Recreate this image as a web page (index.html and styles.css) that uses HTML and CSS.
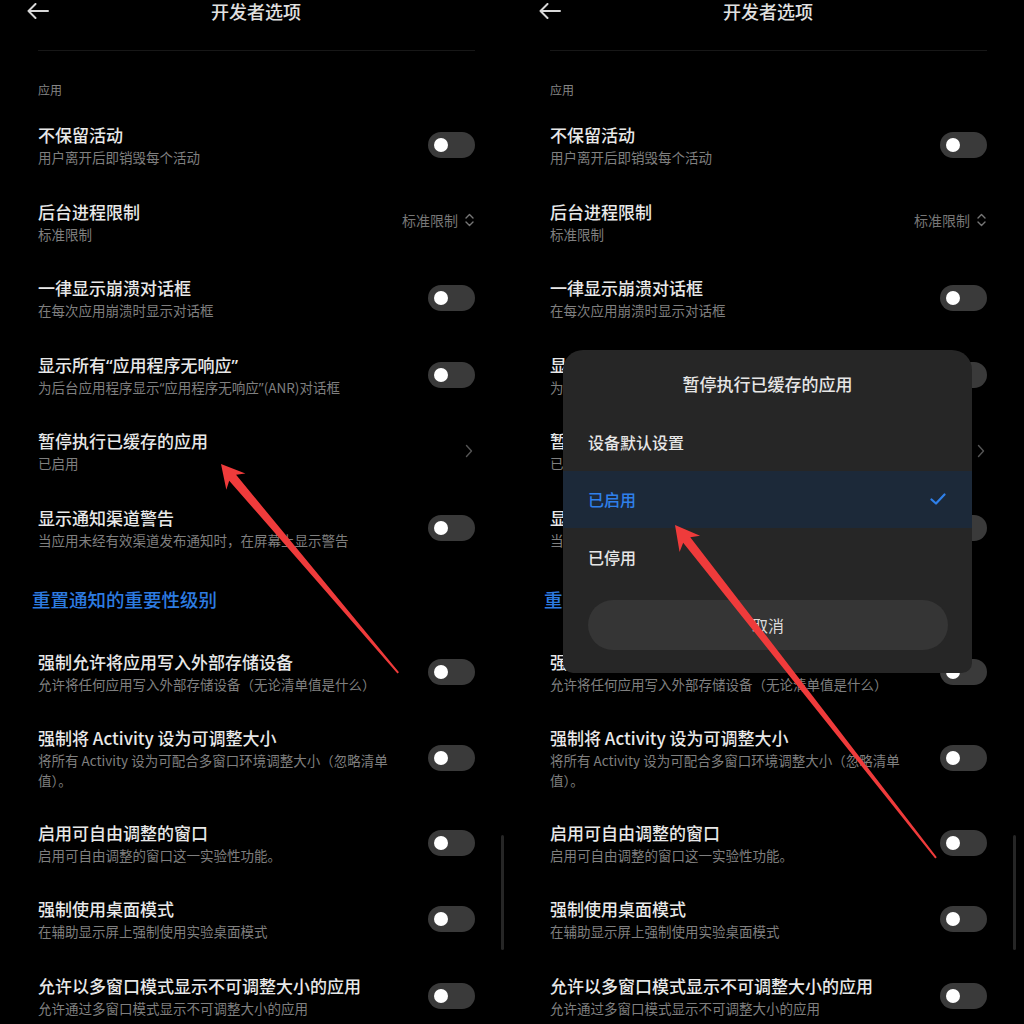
FILE: index.html
```html
<!DOCTYPE html>
<html lang="zh-CN">
<head>
<meta charset="utf-8">
<title>开发者选项</title>
<link rel="stylesheet" href="styles.css">
</head>
<body>
<div class="screens">
  <!-- LEFT PANEL -->
  <section class="panel">
    <header class="header">
      <svg class="back" width="22" height="16" viewBox="0 0 22 16"><path d="M8.5 1 L1.5 8 L8.5 15 M1.5 8 H21" fill="none" stroke="#d8d8d8" stroke-width="2" stroke-linecap="round" stroke-linejoin="round"/></svg>
      <h1 class="title">开发者选项</h1>
    </header>
    <div class="divider"></div>
    <div class="list">
      <div class="section">应用</div>
      <div class="row"><div class="text"><div class="t">不保留活动</div><div class="s">用户离开后即销毁每个活动</div></div><div class="toggle"></div></div>
      <div class="row"><div class="text"><div class="t">后台进程限制</div><div class="s">标准限制</div></div><div class="value">标准限制<svg width="9" height="14" viewBox="0 0 9 14"><path d="M1 5 L4.5 1.5 L8 5 M1 9 L4.5 12.5 L8 9" fill="none" stroke="#777" stroke-width="1.4" stroke-linecap="round" stroke-linejoin="round"/></svg></div></div>
      <div class="row"><div class="text"><div class="t">一律显示崩溃对话框</div><div class="s">在每次应用崩溃时显示对话框</div></div><div class="toggle"></div></div>
      <div class="row"><div class="text"><div class="t">显示所有<span class="q">“</span>应用程序无响应<span class="q">”</span></div><div class="s">为后台应用程序显示<span class="q">“</span>应用程序无响应<span class="q">”</span>(ANR)对话框</div></div><div class="toggle"></div></div>
      <div class="row"><div class="text"><div class="t">暂停执行已缓存的应用</div><div class="s">已启用</div></div><svg class="chev" width="8" height="14" viewBox="0 0 8 14"><path d="M1.5 1.5 L6.5 7 L1.5 12.5" fill="none" stroke="#555" stroke-width="1.4" stroke-linecap="round" stroke-linejoin="round"/></svg></div>
      <div class="row"><div class="text"><div class="t">显示通知渠道警告</div><div class="s">当应用未经有效渠道发布通知时，在屏幕上显示警告</div></div><div class="toggle"></div></div>
      <div class="reset">重置通知的重要性级别</div>
      <div class="row"><div class="text"><div class="t">强制允许将应用写入外部存储设备</div><div class="s">允许将任何应用写入外部存储设备（无论清单值是什么）</div></div><div class="toggle"></div></div>
      <div class="row tall"><div class="text"><div class="t">强制将 Activity 设为可调整大小</div><div class="s">将所有 Activity 设为可配合多窗口环境调整大小（忽略清单值）。</div></div><div class="toggle"></div></div>
      <div class="row"><div class="text"><div class="t">启用可自由调整的窗口</div><div class="s">启用可自由调整的窗口这一实验性功能。</div></div><div class="toggle"></div></div>
      <div class="row"><div class="text"><div class="t">强制使用桌面模式</div><div class="s">在辅助显示屏上强制使用实验桌面模式</div></div><div class="toggle"></div></div>
      <div class="row"><div class="text"><div class="t">允许以多窗口模式显示不可调整大小的应用</div><div class="s">允许通过多窗口模式显示不可调整大小的应用</div></div><div class="toggle"></div></div>
    </div>
    <div class="scrollbar"></div>
    <svg class="annot" width="512" height="1024" viewBox="0 0 512 1024">
      <g transform="translate(221 464) rotate(-130.3)">
        <polygon points="0,0 -23,12.5 -18,4.5 -274,1 -274,-1 -18,-4.5 -23,-12.5" fill="#ef3b3b"/>
      </g>
    </svg>
  </section>

  <!-- RIGHT PANEL -->
  <section class="panel">
    <header class="header">
      <svg class="back" width="22" height="16" viewBox="0 0 22 16"><path d="M8.5 1 L1.5 8 L8.5 15 M1.5 8 H21" fill="none" stroke="#d8d8d8" stroke-width="2" stroke-linecap="round" stroke-linejoin="round"/></svg>
      <h1 class="title">开发者选项</h1>
    </header>
    <div class="divider"></div>
    <div class="list">
      <div class="section">应用</div>
      <div class="row"><div class="text"><div class="t">不保留活动</div><div class="s">用户离开后即销毁每个活动</div></div><div class="toggle"></div></div>
      <div class="row"><div class="text"><div class="t">后台进程限制</div><div class="s">标准限制</div></div><div class="value">标准限制<svg width="9" height="14" viewBox="0 0 9 14"><path d="M1 5 L4.5 1.5 L8 5 M1 9 L4.5 12.5 L8 9" fill="none" stroke="#777" stroke-width="1.4" stroke-linecap="round" stroke-linejoin="round"/></svg></div></div>
      <div class="row"><div class="text"><div class="t">一律显示崩溃对话框</div><div class="s">在每次应用崩溃时显示对话框</div></div><div class="toggle"></div></div>
      <div class="row"><div class="text"><div class="t">显示所有<span class="q">“</span>应用程序无响应<span class="q">”</span></div><div class="s">为后台应用程序显示<span class="q">“</span>应用程序无响应<span class="q">”</span>(ANR)对话框</div></div><div class="toggle"></div></div>
      <div class="row"><div class="text"><div class="t">暂停执行已缓存的应用</div><div class="s">已启用</div></div><svg class="chev" width="8" height="14" viewBox="0 0 8 14"><path d="M1.5 1.5 L6.5 7 L1.5 12.5" fill="none" stroke="#555" stroke-width="1.4" stroke-linecap="round" stroke-linejoin="round"/></svg></div>
      <div class="row"><div class="text"><div class="t">显示通知渠道警告</div><div class="s">当应用未经有效渠道发布通知时，在屏幕上显示警告</div></div><div class="toggle"></div></div>
      <div class="reset">重置通知的重要性级别</div>
      <div class="row"><div class="text"><div class="t">强制允许将应用写入外部存储设备</div><div class="s">允许将任何应用写入外部存储设备（无论清单值是什么）</div></div><div class="toggle"></div></div>
      <div class="row tall"><div class="text"><div class="t">强制将 Activity 设为可调整大小</div><div class="s">将所有 Activity 设为可配合多窗口环境调整大小（忽略清单值）。</div></div><div class="toggle"></div></div>
      <div class="row"><div class="text"><div class="t">启用可自由调整的窗口</div><div class="s">启用可自由调整的窗口这一实验性功能。</div></div><div class="toggle"></div></div>
      <div class="row"><div class="text"><div class="t">强制使用桌面模式</div><div class="s">在辅助显示屏上强制使用实验桌面模式</div></div><div class="toggle"></div></div>
      <div class="row"><div class="text"><div class="t">允许以多窗口模式显示不可调整大小的应用</div><div class="s">允许通过多窗口模式显示不可调整大小的应用</div></div><div class="toggle"></div></div>
    </div>
    <div class="scrollbar"></div>

    <div class="dialog">
      <div class="dlg-title">暂停执行已缓存的应用</div>
      <div class="opt">设备默认设置</div>
      <div class="opt sel">已启用<svg width="16" height="12" viewBox="0 0 16 12"><path d="M1.5 6.5 L6 10.5 L14.5 1.5" fill="none" stroke="#2f80ea" stroke-width="2.2" stroke-linecap="round" stroke-linejoin="round"/></svg></div>
      <div class="opt">已停用</div>
      <div class="cancel">取消</div>
    </div>

    <svg class="annot" width="512" height="1024" viewBox="0 0 512 1024">
      <g transform="translate(163 525) rotate(-128.1)">
        <polygon points="0,0 -24,13 -19,4.5 -423,1 -423,-1 -19,-4.5 -24,-13" fill="#ef3b3b"/>
      </g>
    </svg>
  </section>
</div>
</body>
</html>
```

FILE: styles.css
```css
* {
  box-sizing: border-box;
  margin: 0;
  padding: 0;
}

html,
body {
  background: #000;
}

body {
  width: 1024px;
  height: 1024px;
  overflow: hidden;
  font-family: "Noto Sans CJK SC", "Noto Sans", sans-serif;
  color: #e6e6e6;
}

.screens {
  display: flex;
}

.panel {
  position: relative;
  width: 512px;
  height: 1024px;
  overflow: hidden;
  background: #000;
}

.header {
  position: relative;
  height: 50px;
  display: flex;
  justify-content: center;
  align-items: flex-start;
}

.back {
  position: absolute;
  left: 27px;
  top: 3px;
}

.title {
  font-size: 18px;
  line-height: 22px;
  font-weight: 500;
  color: #e0e0e0;
}

.divider {
  height: 1px;
  margin: 0 37px 0 38px;
  background: #171717;
}

.list {
  padding: 0 37px 0 38px;
}

.section {
  font-size: 12px;
  line-height: 18px;
  color: #858585;
  padding: 30px 0 8px;
}

.row {
  display: flex;
  align-items: center;
  gap: 33px;
  padding: 16px 0 16.5px;
}

.row.tall {
  padding-bottom: 14.5px;
}

.text {
  flex: 1;
  min-width: 0;
}

.t {
  font-size: 17px;
  line-height: 24px;
  font-weight: 500;
  color: #e8e8e8;
}

.s {
  font-size: 13.5px;
  line-height: 20px;
  color: #7f7f7f;
}

.q {
  font-family: "Noto Sans", "DejaVu Sans", sans-serif;
  line-height: 0;
}

.toggle {
  position: relative;
  flex: none;
  width: 47px;
  height: 26px;
  border-radius: 13px;
  background: #3a3a3a;
}

.toggle::after {
  content: "";
  position: absolute;
  left: 6px;
  top: 6px;
  width: 14px;
  height: 14px;
  border-radius: 50%;
  background: #fff;
}

.value {
  display: flex;
  align-items: center;
  gap: 7px;
  font-size: 14px;
  color: #777;
  margin-top: -3px;
  margin-right: 1px;
}

.chev {
  flex: none;
  margin-right: 2px;
}

.reset {
  font-size: 18.5px;
  line-height: 26px;
  font-weight: 500;
  color: #2d7be0;
  margin-left: -6px;
  padding: 20px 0 21.5px;
}

.scrollbar {
  position: absolute;
  left: 501px;
  top: 835px;
  width: 3px;
  height: 115px;
  border-radius: 2px;
  background: #262626;
}

.annot {
  position: absolute;
  left: 0;
  top: 0;
  z-index: 5;
  pointer-events: none;
}

.dialog {
  position: absolute;
  left: 51px;
  top: 350px;
  width: 409px;
  background: #262626;
  border-radius: 20px 20px 10px 10px;
  padding-bottom: 23px;
  z-index: 3;
}

.dlg-title {
  text-align: center;
  font-size: 17px;
  line-height: 24px;
  font-weight: 500;
  color: #e6e6e6;
  padding: 22px 0 17px;
}

.opt {
  height: 57.5px;
  display: flex;
  align-items: center;
  justify-content: space-between;
  padding: 0 26px 0 25px;
  font-size: 16px;
  font-weight: 500;
  color: #e6e6e6;
}

.opt.sel {
  background: #1c2939;
  color: #2f80ea;
}

.cancel {
  height: 50px;
  margin: 14px 24px 0 25px;
  border-radius: 25px;
  background: #353535;
  display: flex;
  align-items: center;
  justify-content: center;
  font-size: 16px;
  color: #dcdcdc;
}
```
